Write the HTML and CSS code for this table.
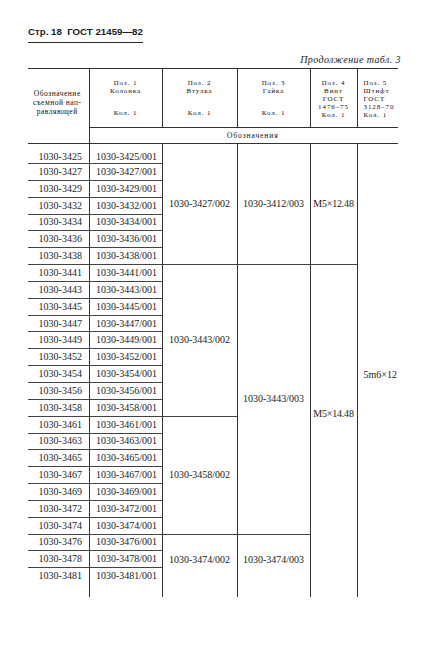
FILE: index.html
```html
<!DOCTYPE html>
<html lang="ru">
<head>
<meta charset="utf-8">
<title>ГОСТ 21459—82, стр. 18</title>
<link rel="stylesheet" href="styles.css">
</head>
<body>
<div class="page">
  <div class="title">Стр. 18 &nbsp;ГОСТ 21459—82</div>
  <div class="cont">Продолжение табл. 3</div>
  <table class="tbl">
    <colgroup>
      <col class="w1"><col class="w2"><col class="w3"><col class="w4"><col class="w5"><col class="w6">
    </colgroup>
    <thead>
      <tr class="h1">
        <th class="hc1" rowspan="2">Обозначение<br>съемной нап-<br>равляющей</th>
        <th class="hc"><div class="hd"><div>Поз. 1<br>Колонка</div><div>Кол. 1</div></div></th>
        <th class="hc"><div class="hd"><div>Поз. 2<br>Втулка</div><div>Кол. 1</div></div></th>
        <th class="hc"><div class="hd"><div>Поз. 3<br>Гайка</div><div>Кол. 1</div></div></th>
        <th class="hc"><div class="hd5">Поз. 4<br>Винт<br>ГОСТ<br>1476–75<br>Кол. 1</div></th>
        <th class="hc hc6"><div class="hd5">Поз. 5<br>Штифт<br>ГОСТ<br>3128–70<br>Кол. 1</div></th>
      </tr>
      <tr class="h2">
        <th class="sub" colspan="5">Обозначения</th>
      </tr>
    </thead>
    <tbody>
      <tr class="first"><td class="c1">1030-3425</td><td class="c2">1030-3425/001</td><td class="g" rowspan="7">1030-3427/002</td><td class="g" rowspan="7">1030-3412/003</td><td class="g c5" rowspan="7">M5×12.48</td><td class="c6" rowspan="26">5m6×12</td></tr>
      <tr><td class="c1">1030-3427</td><td class="c2">1030-3427/001</td></tr>
      <tr><td class="c1">1030-3429</td><td class="c2">1030-3429/001</td></tr>
      <tr><td class="c1">1030-3432</td><td class="c2">1030-3432/001</td></tr>
      <tr><td class="c1">1030-3434</td><td class="c2">1030-3434/001</td></tr>
      <tr><td class="c1">1030-3436</td><td class="c2">1030-3436/001</td></tr>
      <tr><td class="c1">1030-3438</td><td class="c2">1030-3438/001</td></tr>
      <tr><td class="c1">1030-3441</td><td class="c2">1030-3441/001</td><td class="g" rowspan="9">1030-3443/002</td><td class="g" rowspan="16">1030-3443/003</td><td class="g c5 c5b last" rowspan="19">M5×14.48</td></tr>
      <tr><td class="c1">1030-3443</td><td class="c2">1030-3443/001</td></tr>
      <tr><td class="c1">1030-3445</td><td class="c2">1030-3445/001</td></tr>
      <tr><td class="c1">1030-3447</td><td class="c2">1030-3447/001</td></tr>
      <tr><td class="c1">1030-3449</td><td class="c2">1030-3449/001</td></tr>
      <tr><td class="c1">1030-3452</td><td class="c2">1030-3452/001</td></tr>
      <tr><td class="c1">1030-3454</td><td class="c2">1030-3454/001</td></tr>
      <tr><td class="c1">1030-3456</td><td class="c2">1030-3456/001</td></tr>
      <tr><td class="c1">1030-3458</td><td class="c2">1030-3458/001</td></tr>
      <tr><td class="c1">1030-3461</td><td class="c2">1030-3461/001</td><td class="g" rowspan="7">1030-3458/002</td></tr>
      <tr><td class="c1">1030-3463</td><td class="c2">1030-3463/001</td></tr>
      <tr><td class="c1">1030-3465</td><td class="c2">1030-3465/001</td></tr>
      <tr><td class="c1">1030-3467</td><td class="c2">1030-3467/001</td></tr>
      <tr><td class="c1">1030-3469</td><td class="c2">1030-3469/001</td></tr>
      <tr><td class="c1">1030-3472</td><td class="c2">1030-3472/001</td></tr>
      <tr><td class="c1">1030-3474</td><td class="c2">1030-3474/001</td></tr>
      <tr><td class="c1">1030-3476</td><td class="c2">1030-3476/001</td><td class="g last" rowspan="3">1030-3474/002</td><td class="g last" rowspan="3">1030-3474/003</td></tr>
      <tr><td class="c1">1030-3478</td><td class="c2">1030-3478/001</td></tr>
      <tr><td class="c1 last">1030-3481</td><td class="c2 last">1030-3481/001</td></tr>
      <tr class="filler"><td class="f"></td><td class="f"></td><td class="f"></td><td class="f"></td><td class="f"></td><td class="f6"></td></tr>
    </tbody>
  </table>
</div>
</body>
</html>
```
FILE: styles.css
```css
html, body {
  margin: 0;
  padding: 0;
  background: #ffffff;
}
body {
  color: #1c1c1c;
  font-family: "Liberation Serif", "Times New Roman", serif;
  width: 431px;
  height: 645px;
  overflow: hidden;
}
.page {
  width: 373px;
  padding: 26px 0 0 28px;
}
.title {
  display: block;
  width: max-content;
  font-family: "Liberation Sans", Arial, sans-serif;
  font-weight: bold;
  font-size: 9.7px;
  line-height: 12px;
  padding-bottom: 4px;
  border-bottom: 1.5px solid #2a2a2a;
}
.cont {
  margin-top: 11px;
  text-align: right;
  font-style: italic;
  font-size: 10px;
  line-height: 12px;
  letter-spacing: 0.4px;
}
.tbl {
  margin-top: 2px;
  border-collapse: collapse;
  table-layout: fixed;
  width: 370px;
}
.w1 { width: 61px; }
.w2 { width: 73px; }
.w3 { width: 75px; }
.w4 { width: 73px; }
.w5 { width: 47px; }
.w6 { width: 41px; }

.tbl th {
  font-weight: normal;
  font-size: 7px;
  letter-spacing: 0.9px;
  color: #111;
  padding: 0;
  border-top: 1px solid #333;
}
.h1 { height: 59px; }
.h2 { height: 16px; }
.hc1 {
  text-align: center;
  vertical-align: middle;
  font-size: 7.5px !important;
  letter-spacing: 0.5px !important;
  line-height: 9px;
  border-right: 1px solid #333;
  border-bottom: 1px solid #333;
  padding-right: 2px !important;
  padding-bottom: 8px !important;
}
.hc {
  vertical-align: top;
  text-align: center;
  border-right: 1px solid #333;
  border-bottom: 1px solid #333;
  padding-top: 10px !important;
}
.hc6 {
  border-right: none;
  text-align: left;
  padding-left: 6px !important;
}
.hd {
  height: 38px;
  display: flex;
  flex-direction: column;
  justify-content: space-between;
  line-height: 8px;
}
.hd5 {
  line-height: 8px;
}
.sub {
  border-top: none !important;
  border-bottom: 1px solid #333;
  text-align: center;
  vertical-align: middle;
  font-size: 7.5px !important;
  line-height: 10px;
  padding-left: 18px !important;
}

.tbl td {
  padding: 0;
  font-size: 10px;
  line-height: 12px;
  text-align: center;
  vertical-align: middle;
  white-space: nowrap;
}
.tbl tbody tr { height: 16.85px; }
.tbl tbody tr.first { height: 20px; }
.tbl tbody tr.first td.c1,
.tbl tbody tr.first td.c2 { padding-top: 6px; }
.c1 {
  border-right: 1px solid #333;
  border-bottom: 1px solid #444;
  padding-left: 4px !important;
}
.c2 {
  border-right: 1px solid #333;
  border-bottom: 1px solid #444;
  padding-left: 2px !important;
}
.g {
  border-right: 1px solid #333;
  border-bottom: 1px solid #444;
}
.c5 { letter-spacing: -0.2px; }
.c5b { padding-bottom: 22px !important; }
.c6 {
  text-align: left !important;
  padding-left: 6px !important;
  padding-top: 22px !important;
}
.tbl td.last { border-bottom: none; }
.tbl tr.filler { height: 12px; }
.f { border-right: 1px solid #333; }
.f6 { border: none; }
```
